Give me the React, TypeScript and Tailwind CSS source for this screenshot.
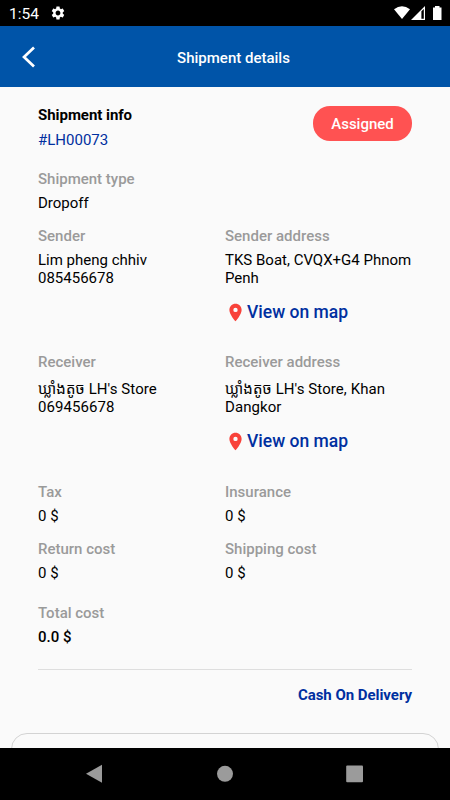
import type { ReactNode } from "react";
import { MdLocationOn, MdSettings } from "react-icons/md";

type FieldProps = {
    label: string;
    children: ReactNode;
    gap?: string;
};

const Field = ({ label, children, gap = "mt-1.5" }: FieldProps) => (
    <div>
        <div className="font-medium text-[#9a9a9a]">{label}</div>
        <div className={gap}>{children}</div>
    </div>
);

const MapLink = () => (
    <button className="mt-[13px] flex h-6 items-center text-[17.5px] font-medium text-[#002fa0]">
        <MdLocationOn className="mr-px h-[21px] w-[21px] text-[#f8423a]" />
        View on map
    </button>
);

const StatusBar = () => (
    <div className="flex h-[26px] shrink-0 items-center justify-between bg-black pl-[9px] pr-2 text-white">
        <div className="flex items-center">
            <span className="w-[41px] pt-px text-[15.5px]">1:54</span>
            <MdSettings className="h-4 w-4" />
        </div>
        <svg width="49" height="14" viewBox="0 0 49 14" className="-mr-px">
            <path d="M0 3.2Q8 -2.7 16 3.2L8 13Z" fill="#fff" />
            <path d="M17 14L31 0V14Z" fill="#fff" />
            <path d="M27.4 5.2L29.8 3V12.8H27.4Z" fill="#000" />
            <path d="M39 1.5H41V0H45.5V1.5H47.5V14H39Z" fill="#fff" />
        </svg>
    </div>
);

const NavBar = () => (
    <div className="flex h-[52px] shrink-0 items-center justify-center bg-black">
        <svg width="278" height="20" viewBox="0 0 278 20" fill="#9b9b9b">
            <path d="M0 9.7L16 0.7V18.7Z" />
            <circle cx="139" cy="9.8" r="8" />
            <rect x="260.2" y="1.4" width="16.8" height="16.8" rx="1" />
        </svg>
    </div>
);

const App = () => {
    return (
        <div className="flex h-[800px] w-[450px] flex-col overflow-hidden bg-[#fafafa] font-['Roboto','Noto_Sans_Khmer',sans-serif] text-[15px] leading-[18px] text-black">
            <StatusBar />
            <header className="grid h-[61px] shrink-0 grid-cols-[60px_1fr_60px] items-center bg-[#0054a8] text-white">
                <button className="pl-[21px]" aria-label="Back">
                    <svg width="15" height="22" viewBox="0 0 15 22" fill="none" stroke="#fff" strokeWidth="2.7">
                        <path d="M13 1.5L3 11L13 20.5" />
                    </svg>
                </button>
                <h1 className="pl-[17px] pt-0.5 text-center font-medium">Shipment details</h1>
            </header>

            <main className="flex min-h-0 flex-1 flex-col overflow-hidden">
                <div className="px-[38px] pt-[19px]">
                    <div className="flex h-[43px] items-start justify-between">
                        <div>
                            <h2 className="font-bold tracking-[-0.04px]">Shipment info</h2>
                            <div className="mt-[7px] text-[#002fa0]">#LH00073</div>
                        </div>
                        <span className="flex h-[35px] w-[99px] items-center justify-center rounded-[17px] bg-[#ff5252] font-medium text-white">
                            Assigned
                        </span>
                    </div>

                    <div className="mt-[21px]">
                        <Field label="Shipment type">Dropoff</Field>
                    </div>

                    <div className="mt-[15px] grid grid-cols-2">
                        <Field label="Sender">
                            Lim pheng chhiv<br />085456678
                        </Field>
                        <div>
                            <Field label="Sender address">
                                TKS Boat, CVQX+G4 Phnom<br />Penh
                            </Field>
                            <MapLink />
                        </div>
                    </div>

                    <div className="mt-[29px] grid grid-cols-2">
                        <Field label="Receiver" gap="mt-[9px] tracking-[0.08px]">
                            ឃ្លាំងតូច LH's Store<br />069456678
                        </Field>
                        <div>
                            <Field label="Receiver address" gap="mt-[9px] tracking-[0.08px]">
                                ឃ្លាំងតូច LH's Store, Khan<br />Dangkor
                            </Field>
                            <MapLink />
                        </div>
                    </div>

                    <div className="mt-[30px] grid grid-cols-2 gap-y-[15px]">
                        <Field label="Tax">0 $</Field>
                        <Field label="Insurance">0 $</Field>
                        <Field label="Return cost">0 $</Field>
                        <Field label="Shipping cost">0 $</Field>
                    </div>

                    <div className="mt-[22px]">
                        <Field label="Total cost">
                            <span className="font-medium">0.0 $</span>
                        </Field>
                    </div>

                    <div className="mt-[23px] border-t border-[#dedede] pt-4 text-right font-bold tracking-[-0.04px] text-[#002fa0]">
                        Cash On Delivery
                    </div>
                </div>

                <div className="mx-[11px] mt-[29px] h-16 shrink-0 rounded-2xl border border-[#d3d3d3]" />
            </main>

            <NavBar />
        </div>
    );
};

export default App;
